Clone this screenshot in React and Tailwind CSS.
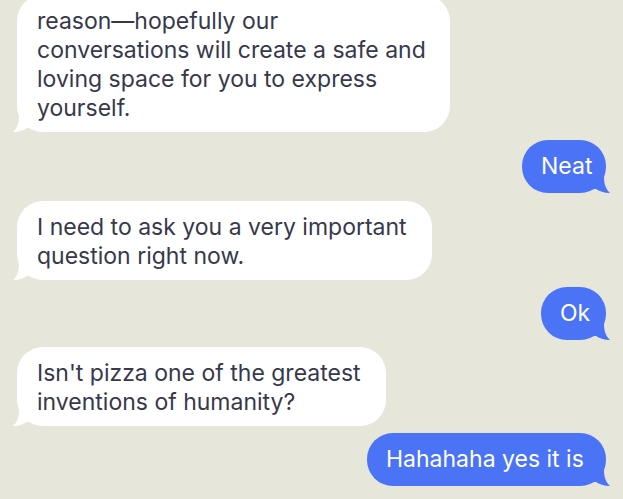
import React from "react";

function LeftTail() {
  return (
    <svg className="absolute left-[-4px] bottom-0" width="16" height="16" viewBox="0 0 16 16">
      <path d="M16 0 H6 C6 8 4 12 0 16 C6 16 11 14 14 12 H16 Z" fill="#ffffff" />
    </svg>
  );
}

function RightTail() {
  return (
    <svg className="absolute right-[-4px] bottom-0" width="16" height="16" viewBox="0 0 16 16">
      <path d="M0 0 H10 C10 8 12 12 16 16 C10 16 5 14 2 12 H0 Z" fill="#4b73f5" />
    </svg>
  );
}

function Left({ lines, w, className = "" }) {
  return (
    <div className={`relative self-start ${className}`} style={{ width: w }}>
      <LeftTail />
      <div className="relative rounded-[26px] bg-white pl-[20px] pr-[10px] pt-[12px] pb-[9px] text-[23px] leading-[29px] text-[#38384b]">
        {lines.map((l, i) => (
          <div key={i} className="whitespace-nowrap">{l}</div>
        ))}
      </div>
    </div>
  );
}

function Right({ text, w, className = "" }) {
  return (
    <div className={`relative self-end ${className}`} style={{ width: w }}>
      <RightTail />
      <div className="relative rounded-[26px] bg-[#4b73f5] pl-[19px] pt-[12px] pb-[12px] text-[23px] leading-[29px] text-white whitespace-nowrap">
        {text}
      </div>
    </div>
  );
}

export default function App() {
  return (
    <div
      className="w-[623px] h-[499px] overflow-hidden bg-[#e7e6da] pl-[17px] pr-[17px] flex flex-col gap-[7px]"
      style={{ fontFamily: "Inter, 'Liberation Sans', sans-serif" }}
    >
      <Left
        className="mt-[-5px]"
        w={433}
        lines={[
          "reason\u2014hopefully our",
          "conversations will create a safe and",
          "loving space for you to express",
          "yourself.",
        ]}
      />
      <Right className="mt-[1px]" text="Neat" w={84} />
      <Left className="mt-[1px]" w={415} lines={["I need to ask you a very important", "question right now."]} />
      <Right text="Ok" w={65} />
      <Left w={369} lines={["Isn't pizza one of the greatest", "inventions of humanity?"]} />
      <Right text="Hahahaha yes it is" w={239} />
    </div>
  );
}
